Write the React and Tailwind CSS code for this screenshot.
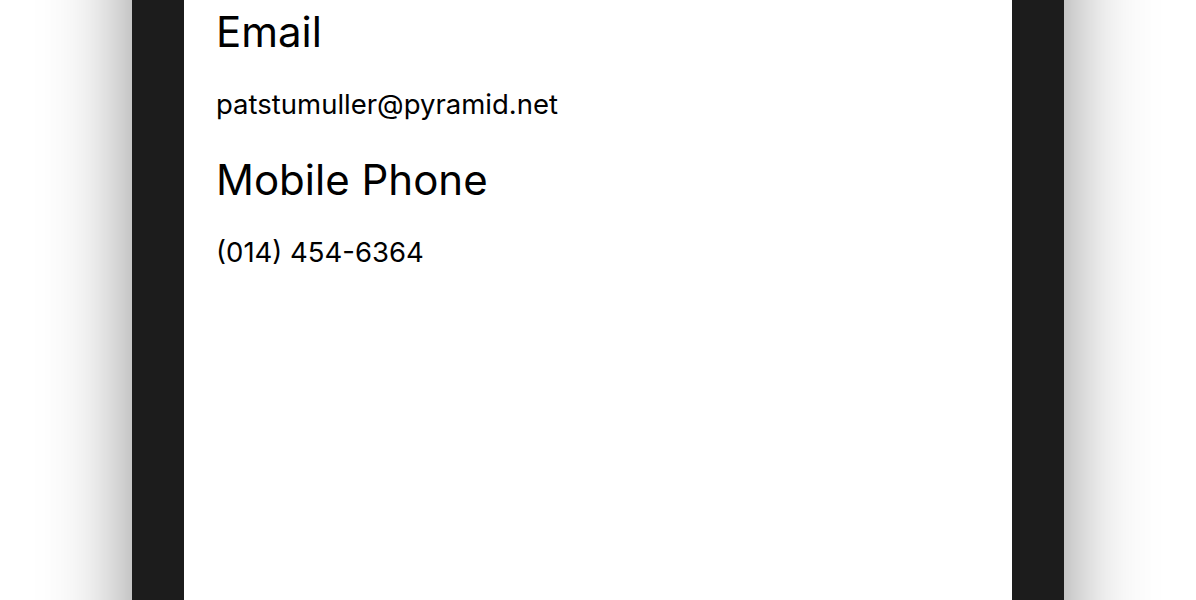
import React from "react";

const fields = [
  { label: "Email", value: "patstumuller@pyramid.net" },
  { label: "Mobile Phone", value: "(014) 454-6364" },
];

export default function App() {
  return (
    <div className="h-[600px] w-full overflow-hidden bg-white flex justify-center" style={{ fontFamily: "Inter, 'Noto Sans', sans-serif" }}>
      {/* device frame, scrolled so its top is out of view */}
      <div className="-mt-[120px] w-[932px] h-[840px] shrink-0 bg-[#1c1c1c] px-[52px] shadow-[0_0_80px_rgba(0,0,0,0.45)]">
        <div className="h-full bg-white px-8 pt-[131px] text-black flex flex-col gap-[41px]">
          {fields.map((f) => (
            <div key={f.label}>
              <h2 className="text-[42px] leading-[42px] font-normal">{f.label}</h2>
              <p className="mt-[37px] text-[27.5px] leading-[28px]">{f.value}</p>
            </div>
          ))}
        </div>
      </div>
    </div>
  );
}
